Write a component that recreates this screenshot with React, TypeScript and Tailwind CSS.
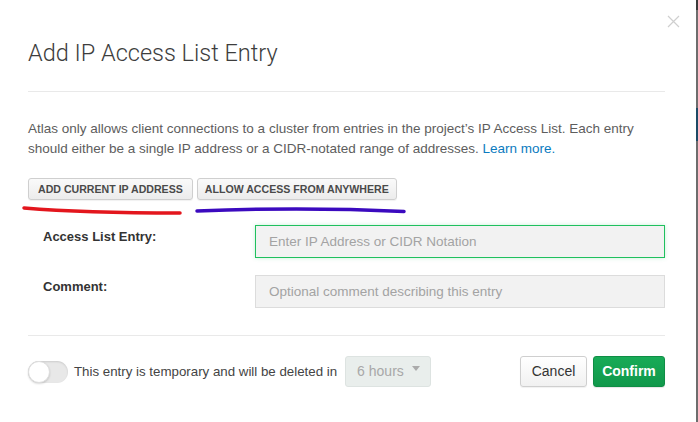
import React from "react";

function CloseIcon() {
  return (
    <svg width="13" height="13" viewBox="0 0 13 13" fill="none">
      <path d="M1 1L12 12M12 1L1 12" stroke="#cfcfcf" strokeWidth="1.2" />
    </svg>
  );
}

export default function App() {
  return (
    <div className="flex h-[422px] w-[698px] overflow-hidden bg-white font-['Liberation_Sans',Arial,sans-serif]">
      <div className="relative flex-1 bg-white pl-[28px] pr-[31px] pt-[38px]">
        <button className="absolute right-[16px] top-[15px] leading-none">
          <CloseIcon />
        </button>

        <h2 className="font-['Roboto',sans-serif] text-[23.5px] font-light leading-[30px] text-[#3d3d3d]">
          Add IP Access List Entry
        </h2>
        <div className="mt-[23px] h-px bg-[#e9e9e9]" />

        <p className="mt-[27px] text-[13.5px] leading-[20px] text-[#5d5d5d]">
          Atlas only allows client connections to a cluster from entries in the project’s IP Access List. Each entry
          <br />
          should either be a single IP address or a CIDR-notated range of addresses.{" "}
          <a className="text-[#0b7bc0]">Learn more.</a>
        </p>

        <div className="relative mt-[19px] flex gap-[4px]">
          <button className="h-[22px] rounded-[3px] border border-[#cfcfcf] bg-gradient-to-b from-[#fafafa] to-[#ececec] px-[9px] text-[10.6px] font-bold leading-[20px] text-[#4a4a4a] shadow-[0_1px_1px_rgba(0,0,0,0.06)]">
            ADD CURRENT IP ADDRESS
          </button>
          <button className="h-[22px] rounded-[3px] border border-[#cfcfcf] bg-gradient-to-b from-[#fafafa] to-[#ececec] px-[7px] text-[10.6px] font-bold leading-[20px] text-[#4a4a4a] shadow-[0_1px_1px_rgba(0,0,0,0.06)]">
            ALLOW ACCESS FROM ANYWHERE
          </button>
          <svg
            className="pointer-events-none absolute left-[-28px] top-[22px]"
            width="430"
            height="20"
            viewBox="0 0 430 20"
            fill="none"
          >
            <path d="M24 8 C 60 11, 110 13, 180 13" stroke="#e3161d" strokeWidth="3.5" strokeLinecap="round" />
            <path d="M197 11 C 260 8.5, 340 8.5, 404 11.5" stroke="#3b0abf" strokeWidth="3.5" strokeLinecap="round" />
          </svg>
        </div>

        <div className="mt-[25px] flex flex-col gap-[17px] pl-[15px]">
          <div className="flex">
            <label className="w-[212px] pt-[4px] text-[13px] font-bold leading-[16px] text-[#333]">
              Access List Entry:
            </label>
            <input
              className="h-[33px] w-[410px] border border-[#1fc05e] bg-[#f2f2f2] px-[13px] text-[13.5px] text-[#333] shadow-[0_0_4px_rgba(31,192,94,0.25)] outline-none placeholder:text-[#a3a3a3]"
              placeholder="Enter IP Address or CIDR Notation"
            />
          </div>
          <div className="flex">
            <label className="w-[212px] pt-[4px] text-[13px] font-bold leading-[16px] text-[#333]">
              Comment:
            </label>
            <input
              className="h-[33px] w-[410px] border border-[#dcdcdc] bg-[#f2f2f2] px-[13px] text-[13.5px] text-[#333] outline-none placeholder:text-[#a3a3a3]"
              placeholder="Optional comment describing this entry"
            />
          </div>
        </div>

        <div className="mt-[27px] h-px bg-[#e9e9e9]" />

        <div className="mt-[20px] flex h-[31px] items-center">
          <div className="relative h-[22px] w-[40px] rounded-full bg-[#e8e8e8] shadow-[inset_0_1px_2px_rgba(0,0,0,0.12)]">
            <div className="absolute left-0 top-0 h-[22px] w-[22px] rounded-full border border-[#dedede] bg-white shadow-[0_1px_2px_rgba(0,0,0,0.15)]" />
          </div>
          <span className="ml-[6px] text-[13.3px] text-[#444]">
            This entry is temporary and will be deleted in
          </span>
          <div className="ml-[8px] flex h-[31px] w-[86px] items-center justify-between rounded-[3px] border border-[#dde3e1] bg-[#e9eeec] pl-[11px] pr-[10px]">
            <span className="text-[14px] text-[#a8a8a8]">6 hours</span>
            <svg width="8" height="5" viewBox="0 0 8 5" className="mb-[6px]">
              <path d="M0 0H8L4 5Z" fill="#ababab" />
            </svg>
          </div>
          <div className="flex-1" />
          <button className="h-[31px] w-[67px] rounded-[3px] border border-[#cfcfcf] bg-gradient-to-b from-white to-[#f1f1f1] text-[14px] text-[#333] shadow-[0_1px_1px_rgba(0,0,0,0.06)]">
            Cancel
          </button>
          <button className="ml-[6px] h-[31px] w-[72px] rounded-[3px] border border-[#0f8d45] bg-gradient-to-b from-[#18ab57] to-[#11984b] text-[14px] font-bold text-white shadow-[0_1px_1px_rgba(0,0,0,0.1)]">
            Confirm
          </button>
        </div>
      </div>
      <div className="flex w-[2px] flex-col bg-[#6d6d6d]">
        <div className="h-[10px] bg-[#3a3a3a]" />
        <div className="mt-[98px] h-[33px] bg-[#1d4a65]" />
      </div>
    </div>
  );
}
